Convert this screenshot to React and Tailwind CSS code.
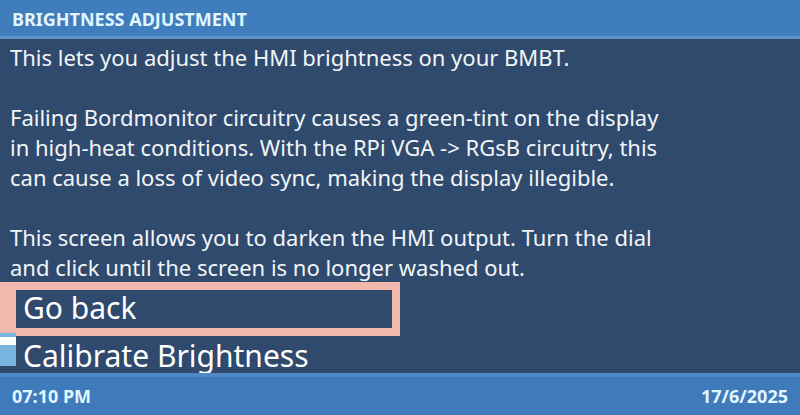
export default function App() {
  const items = ["Go back", "Calibrate Brightness"];
  const selected = 0;

  return (
    <div className="w-[800px] h-[415px] flex flex-col overflow-hidden bg-[#2f4a6d] font-['Noto_Sans',sans-serif]">
      {/* Title bar */}
      <div className="h-[39px] shrink-0 flex items-center px-[12px] pt-[2px] bg-[#3f7dbd] border-b-[3px] border-[#5b93cc]">
        <span className="text-[18px] font-bold text-[#e2f6ff] leading-none">BRIGHTNESS ADJUSTMENT</span>
      </div>

      {/* Content */}
      <div className="flex-1 min-h-0 overflow-hidden">
        <p className="pl-[10px] pt-[3px] text-[22px] leading-[30px] text-[#f2f5f8]">
          This lets you adjust the HMI brightness on your BMBT.
          <br />
          <br />
          Failing Bordmonitor circuitry causes a green-tint on the display
          <br />
          in high-heat conditions. With the RPi VGA -&gt; RGsB circuitry, this
          <br />
          can cause a loss of video sync, making the display illegible.
          <br />
          <br />
          This screen allows you to darken the HMI output. Turn the dial
          <br />
          and click until the screen is no longer washed out.
        </p>

        {/* Menu */}
        <div className="relative pt-[8px] pl-[16px] flex flex-col gap-[10px] w-[392px]">
          {items.map((label, i) => (
            <div
              key={label}
              className={
                i === selected
                  ? "h-[38px] pl-[7px] text-[30px] leading-[35px] whitespace-nowrap text-white shadow-[0_0_0_8px_#f0b9ab,-8px_0_0_8px_#f0b9ab]"
                  : "h-[38px] pl-[7px] text-[30px] leading-[35px] whitespace-nowrap text-white"
              }
            >
              {label}
            </div>
          ))}
          {/* Scroll indicator */}
          <div className="absolute left-0 top-[51px] w-[16px] h-[33px] bg-[#79b5de] z-10">
            <div className="mt-[4px] h-[8px] bg-white"></div>
          </div>
        </div>
      </div>

      {/* Status bar */}
      <div className="h-[42px] shrink-0 flex items-center justify-between px-[12px] bg-[#3f7abb] border-t-[4px] border-[#4f8ac6]">
        <span className="text-[18px] font-bold text-[#e2f6ff] leading-none">07:10 PM</span>
        <span className="text-[18px] font-bold text-[#e2f6ff] leading-none">17/6/2025</span>
      </div>
    </div>
  );
}
